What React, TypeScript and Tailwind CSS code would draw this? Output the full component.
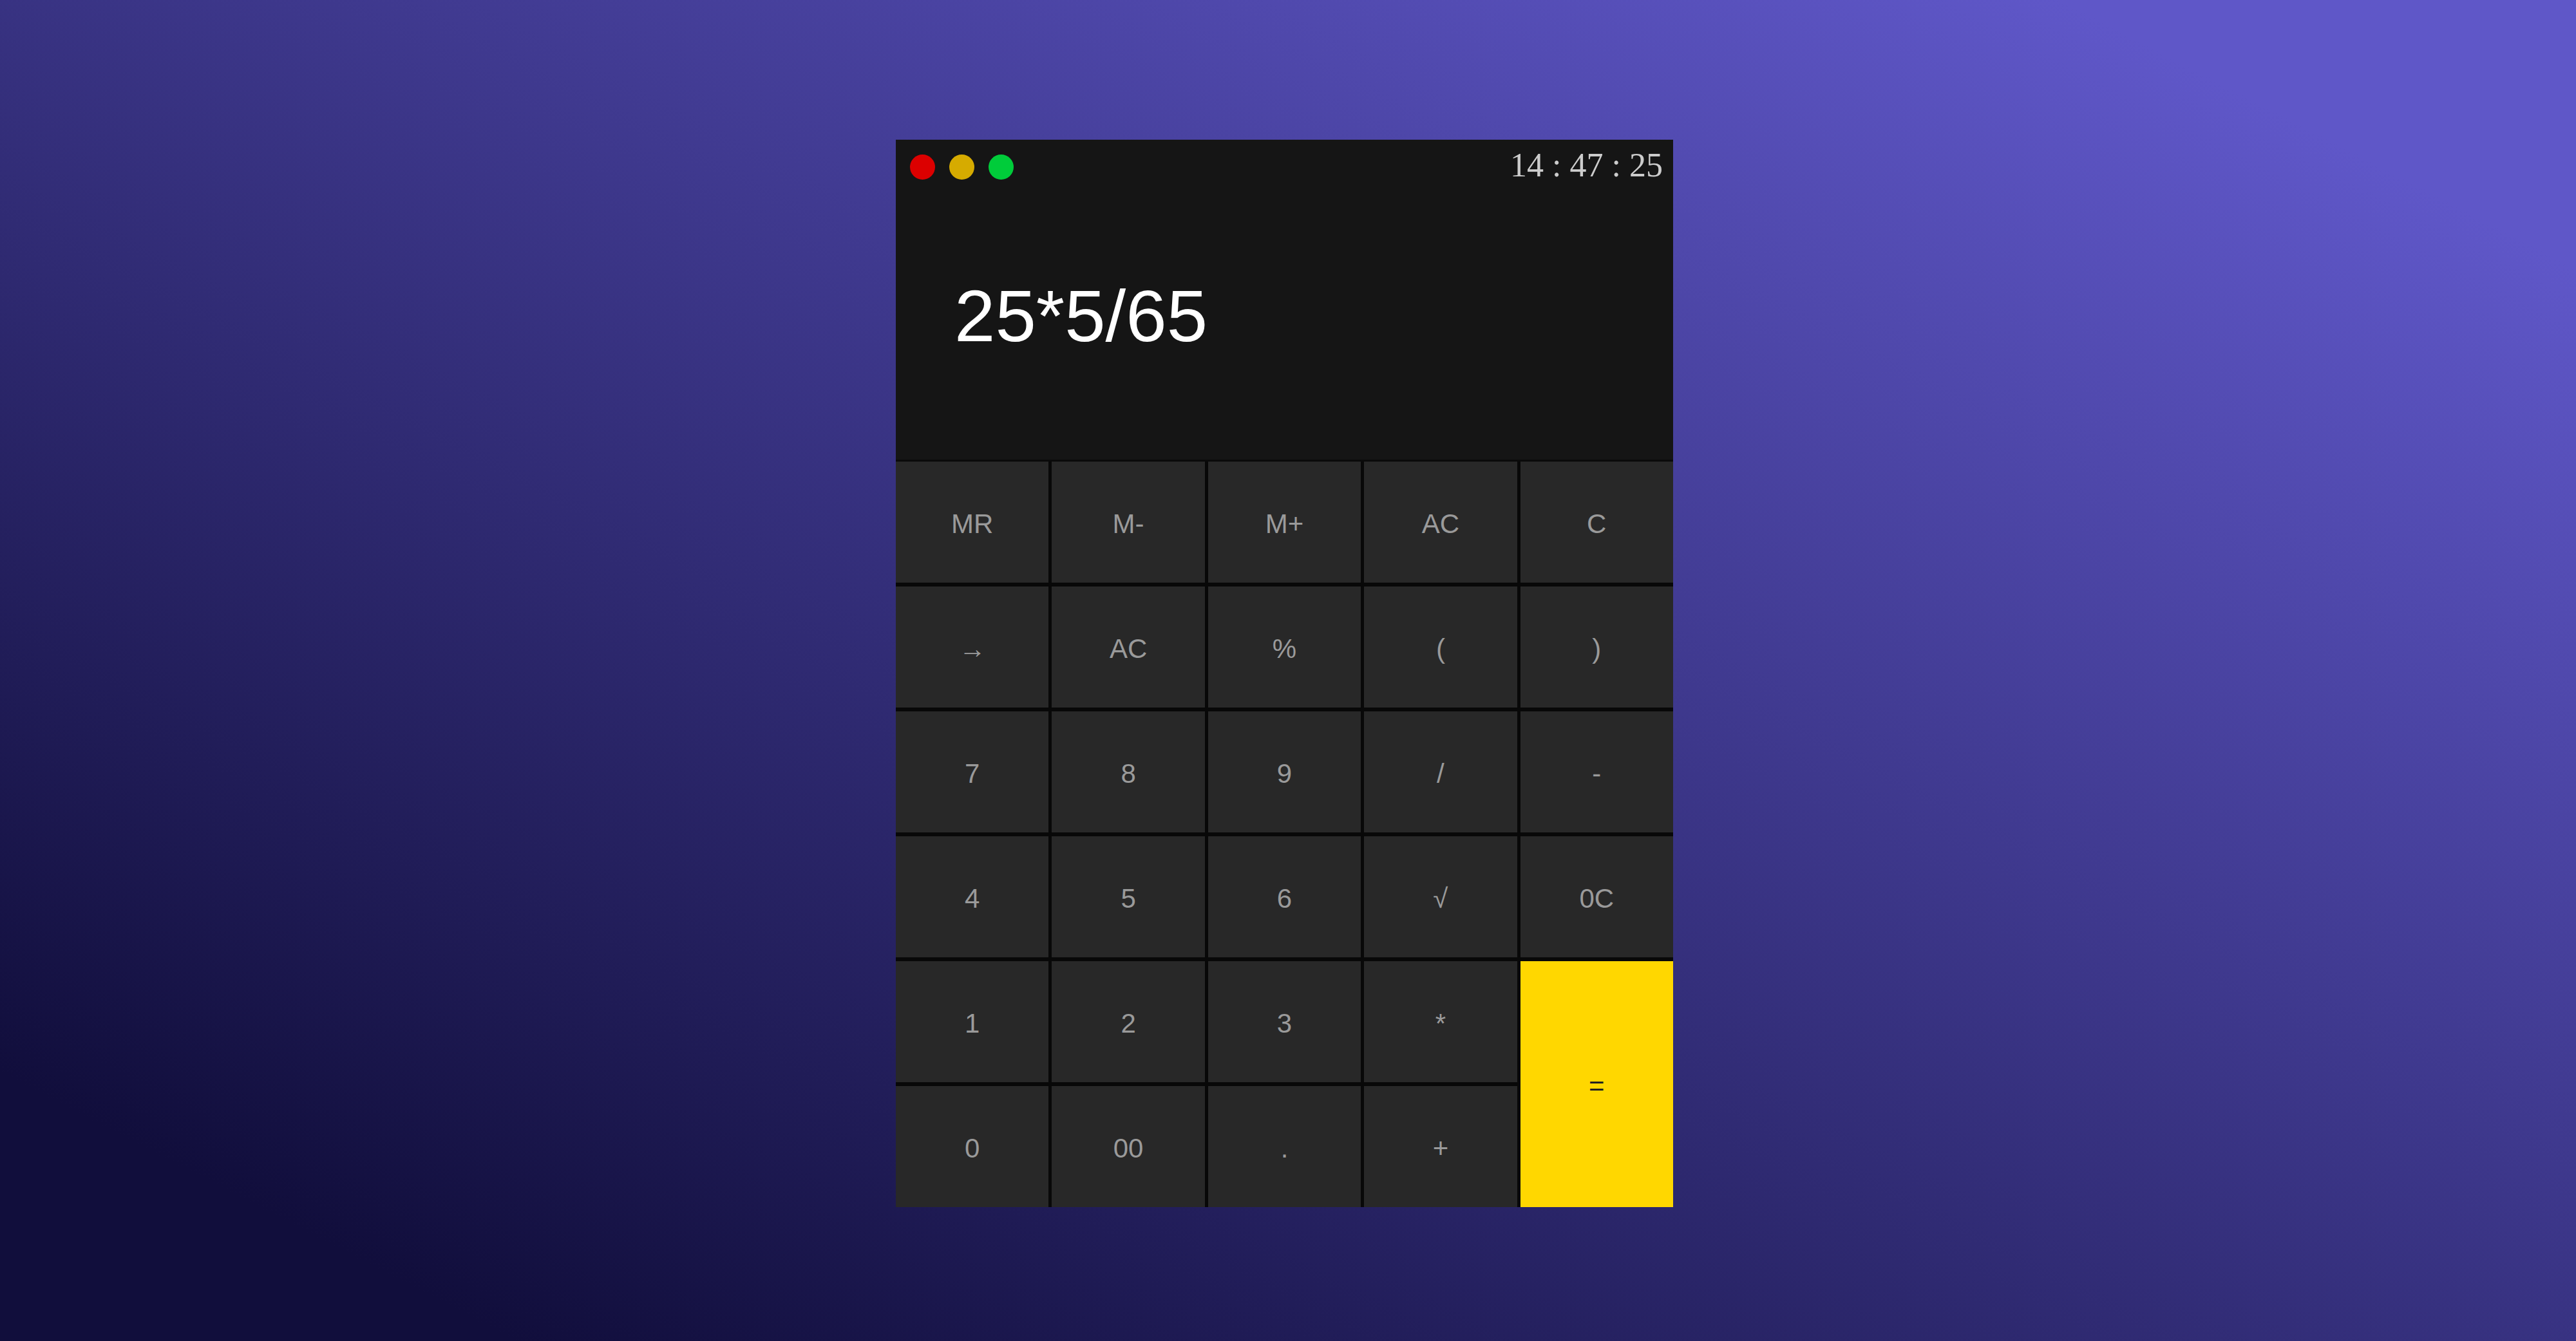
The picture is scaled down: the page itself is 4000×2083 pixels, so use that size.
import React from "react";

type Key = { label: string; accent?: boolean };

const keys: Key[] = [
  { label: "MR" },
  { label: "M-" },
  { label: "M+" },
  { label: "AC" },
  { label: "C" },
  { label: "→" },
  { label: "AC" },
  { label: "%" },
  { label: "(" },
  { label: ")" },
  { label: "7" },
  { label: "8" },
  { label: "9" },
  { label: "/" },
  { label: "-" },
  { label: "4" },
  { label: "5" },
  { label: "6" },
  { label: "√" },
  { label: "0C" },
  { label: "1" },
  { label: "2" },
  { label: "3" },
  { label: "*" },
  { label: "=", accent: true },
  { label: "0" },
  { label: "00" },
  { label: "." },
  { label: "+" },
];

export default function App() {
  return (
    <div className="h-screen w-full overflow-hidden bg-[linear-gradient(to_top_right,#110e3c_10%,#5f57c8_90%)] flex items-center justify-center pt-[9px] pr-[11px] font-['Liberation_Sans',Arial,sans-serif]">
      <div className="w-[1207px] flex flex-col">
        {/* Display */}
        <div className="h-[500px] bg-[#151515] flex flex-col border-b-[3px] border-[#0a0a0a]">
          <div className="flex items-start justify-between">
            <div className="flex items-center gap-[22px] mt-[23px] ml-[22px]">
              <span className="block w-[39px] h-[39px] rounded-full bg-[#dc0000]" />
              <span className="block w-[39px] h-[39px] rounded-full bg-[#d6ab00]" />
              <span className="block w-[39px] h-[39px] rounded-full bg-[#00cc3a]" />
            </div>
            <div className="mt-[14px] mr-[16px] text-[52px] leading-none text-[#cccccc] font-['Liberation_Serif','Times_New_Roman',serif]">
              14 : 47 : 25
            </div>
          </div>
          <div className="mt-[151px] ml-[91px] text-[114px] leading-none text-white">
            25*5/65
          </div>
        </div>
        {/* Keypad */}
        <div className="grid grid-cols-5 grid-rows-[repeat(6,188px)] gap-x-[5px] gap-y-[6px] bg-[#080808]">
          {keys.map((k, i) =>
            k.accent ? (
              <button
                key={i}
                className="row-span-2 bg-[#ffd700] text-[#222222] text-[42px] pt-[4px] flex items-center justify-center"
              >
                {k.label}
              </button>
            ) : (
              <button
                key={i}
                className="bg-[#282828] text-[#9a9a9a] text-[42px] pt-[4px] flex items-center justify-center"
              >
                {k.label}
              </button>
            )
          )}
        </div>
      </div>
    </div>
  );
}
